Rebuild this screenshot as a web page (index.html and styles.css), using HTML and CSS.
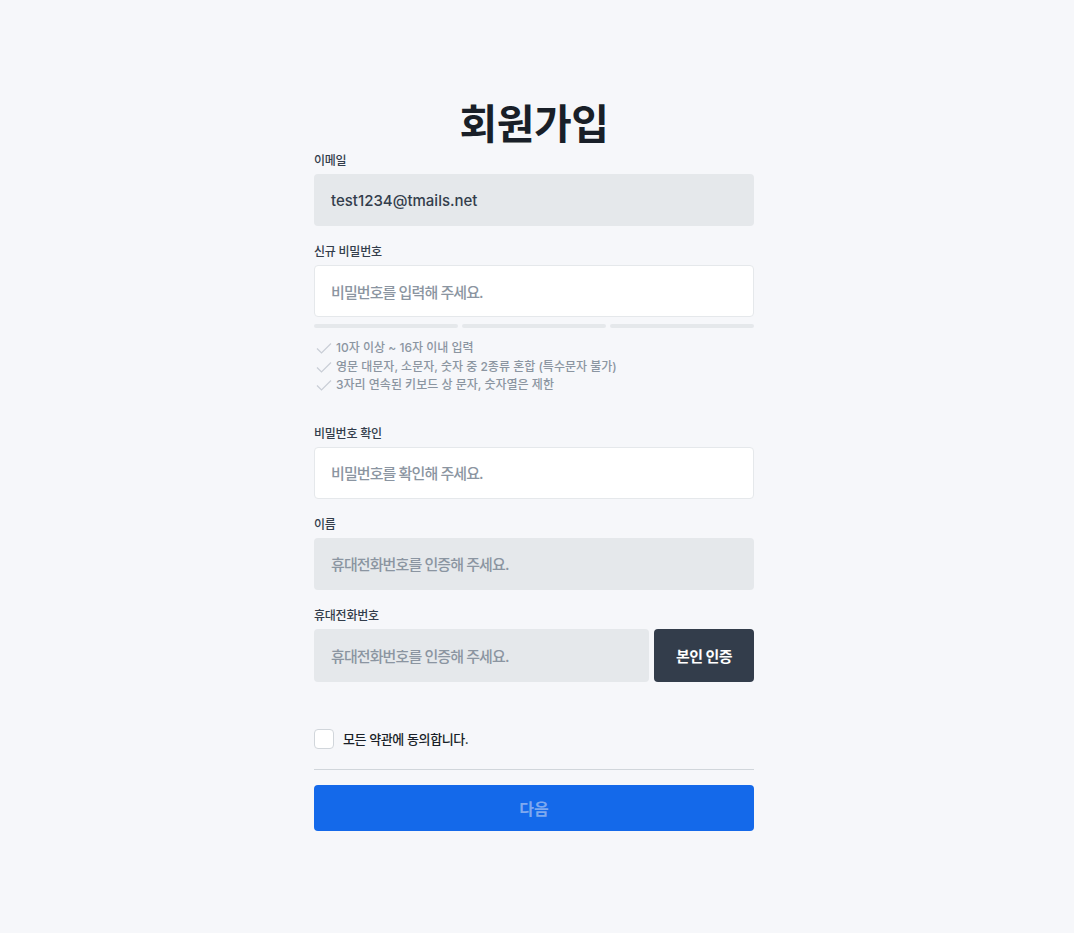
FILE: index.html
```html
<!DOCTYPE html>
<html lang="ko">
<head>
<meta charset="utf-8">
<title>회원가입</title>
<link rel="stylesheet" href="styles.css">
</head>
<body>
<main class="page">
  <form class="form">
    <h1 class="title">회원가입</h1>

    <div class="field">
      <label class="label">이메일</label>
      <div class="input filled email">test1234@tmails.net</div>
    </div>

    <div class="field">
      <label class="label">신규 비밀번호</label>
      <div class="input white placeholder">비밀번호를 입력해 주세요.</div>
      <div class="bars"><span></span><span></span><span></span></div>
      <ul class="rules">
        <li><svg viewBox="0 0 16 12" class="chk"><path d="M1 6.5 L5.5 11 L15 1.5" fill="none" stroke="#c9ced6" stroke-width="1.2"/></svg>10자 이상 ~ 16자 이내 입력</li>
        <li><svg viewBox="0 0 16 12" class="chk"><path d="M1 6.5 L5.5 11 L15 1.5" fill="none" stroke="#c9ced6" stroke-width="1.2"/></svg>영문 대문자, 소문자, 숫자 중 2종류 혼합 (특수문자 불가)</li>
        <li><svg viewBox="0 0 16 12" class="chk"><path d="M1 6.5 L5.5 11 L15 1.5" fill="none" stroke="#c9ced6" stroke-width="1.2"/></svg>3자리 연속된 키보드 상 문자, 숫자열은 제한</li>
      </ul>
    </div>

    <div class="field spaced">
      <label class="label">비밀번호 확인</label>
      <div class="input white placeholder">비밀번호를 확인해 주세요.</div>
    </div>

    <div class="field">
      <label class="label">이름</label>
      <div class="input filled placeholder">휴대전화번호를 인증해 주세요.</div>
    </div>

    <div class="field">
      <label class="label">휴대전화번호</label>
      <div class="row">
        <div class="input filled placeholder grow">휴대전화번호를 인증해 주세요.</div>
        <button type="button" class="verify">본인 인증</button>
      </div>
    </div>

    <div class="agree">
      <span class="box"></span>
      <span class="agree-text">모든 약관에 동의합니다.</span>
    </div>

    <hr class="divider">

    <button type="button" class="next">다음</button>
  </form>
</main>
</body>
</html>
```

FILE: styles.css
```css
* { box-sizing: border-box; }
html, body { margin: 0; padding: 0; }
body {
  background: #f6f7fa;
  font-family: Inter, "Noto Sans CJK KR", sans-serif;
  color: #333d4b;
  height: 933px;
  letter-spacing: -0.06em;
}
.page {
  display: flex;
  justify-content: center;
  padding-top: 100px;
  padding-right: 6px;
}
.form {
  width: 440px;
  display: flex;
  flex-direction: column;
}
.title {
  margin: 0 0 2px;
  text-align: center;
  font-size: 41px;
  line-height: 48px;
  font-weight: 700;
  color: #191f28;
  letter-spacing: -0.5px;
}
.field {
  display: flex;
  flex-direction: column;
  margin-bottom: 15px;
}
.field.spaced { margin-top: 13px; }
.label {
  font-size: 12px;
  line-height: 18px;
  font-weight: 500;
  color: #333d4b;
  padding-top: 2px;
  margin-bottom: 4px;
  letter-spacing: -0.02em;
}
.input {
  height: 52px;
  border-radius: 4px;
  padding: 0 17px;
  display: flex;
  align-items: center;
  font-size: 15px;
  font-weight: 500;
  color: #333d4b;
}
.input.email { letter-spacing: 0; }
.input.filled { background: #e5e8eb; }
.input.white { background: #fff; border: 1px solid #e5e8eb; padding-left: 16px; }
.input.placeholder { color: #8b95a1; letter-spacing: -0.9px; }
.bars {
  display: flex;
  gap: 4px;
  margin-top: 7px;
}
.bars span {
  flex: 1;
  height: 4px;
  border-radius: 2px;
  background: #e5e8eb;
}
.rules {
  list-style: none;
  margin: 11px 0 0;
  padding: 0;
}
.rules li {
  display: flex;
  align-items: center;
  font-size: 12px;
  line-height: 18.5px;
  font-weight: 500;
  color: #8b95a1;
  letter-spacing: 0;
}
.chk {
  width: 16px;
  height: 12px;
  margin: 0 4px 0 2px;
}
.row {
  display: flex;
  gap: 5px;
}
.grow { flex: 1; height: 53px; }
.verify {
  width: 100px;
  height: 53px;
  border: 0;
  border-radius: 4px;
  background: #333d4b;
  color: #fff;
  font-family: inherit;
  font-size: 15px;
  font-weight: 700;
  letter-spacing: -0.04em;
  padding: 0;
}
.agree {
  display: flex;
  align-items: center;
  gap: 9px;
  margin-top: 32px;
}
.box {
  width: 20px;
  height: 20px;
  border: 1.5px solid #d1d6db;
  border-radius: 4px;
  background: #fff;
}
.agree-text {
  font-size: 13px;
  font-weight: 500;
  color: #191f28;
  letter-spacing: -0.03em;
}
.divider {
  border: 0;
  border-top: 1px solid #d1d6db;
  margin: 20px 0 15px;
  width: 100%;
}
.next {
  height: 46px;
  border: 0;
  border-radius: 4px;
  background: #1469ea;
  color: #7fa9ef;
  font-family: inherit;
  font-size: 16px;
  font-weight: 700;
}
```
